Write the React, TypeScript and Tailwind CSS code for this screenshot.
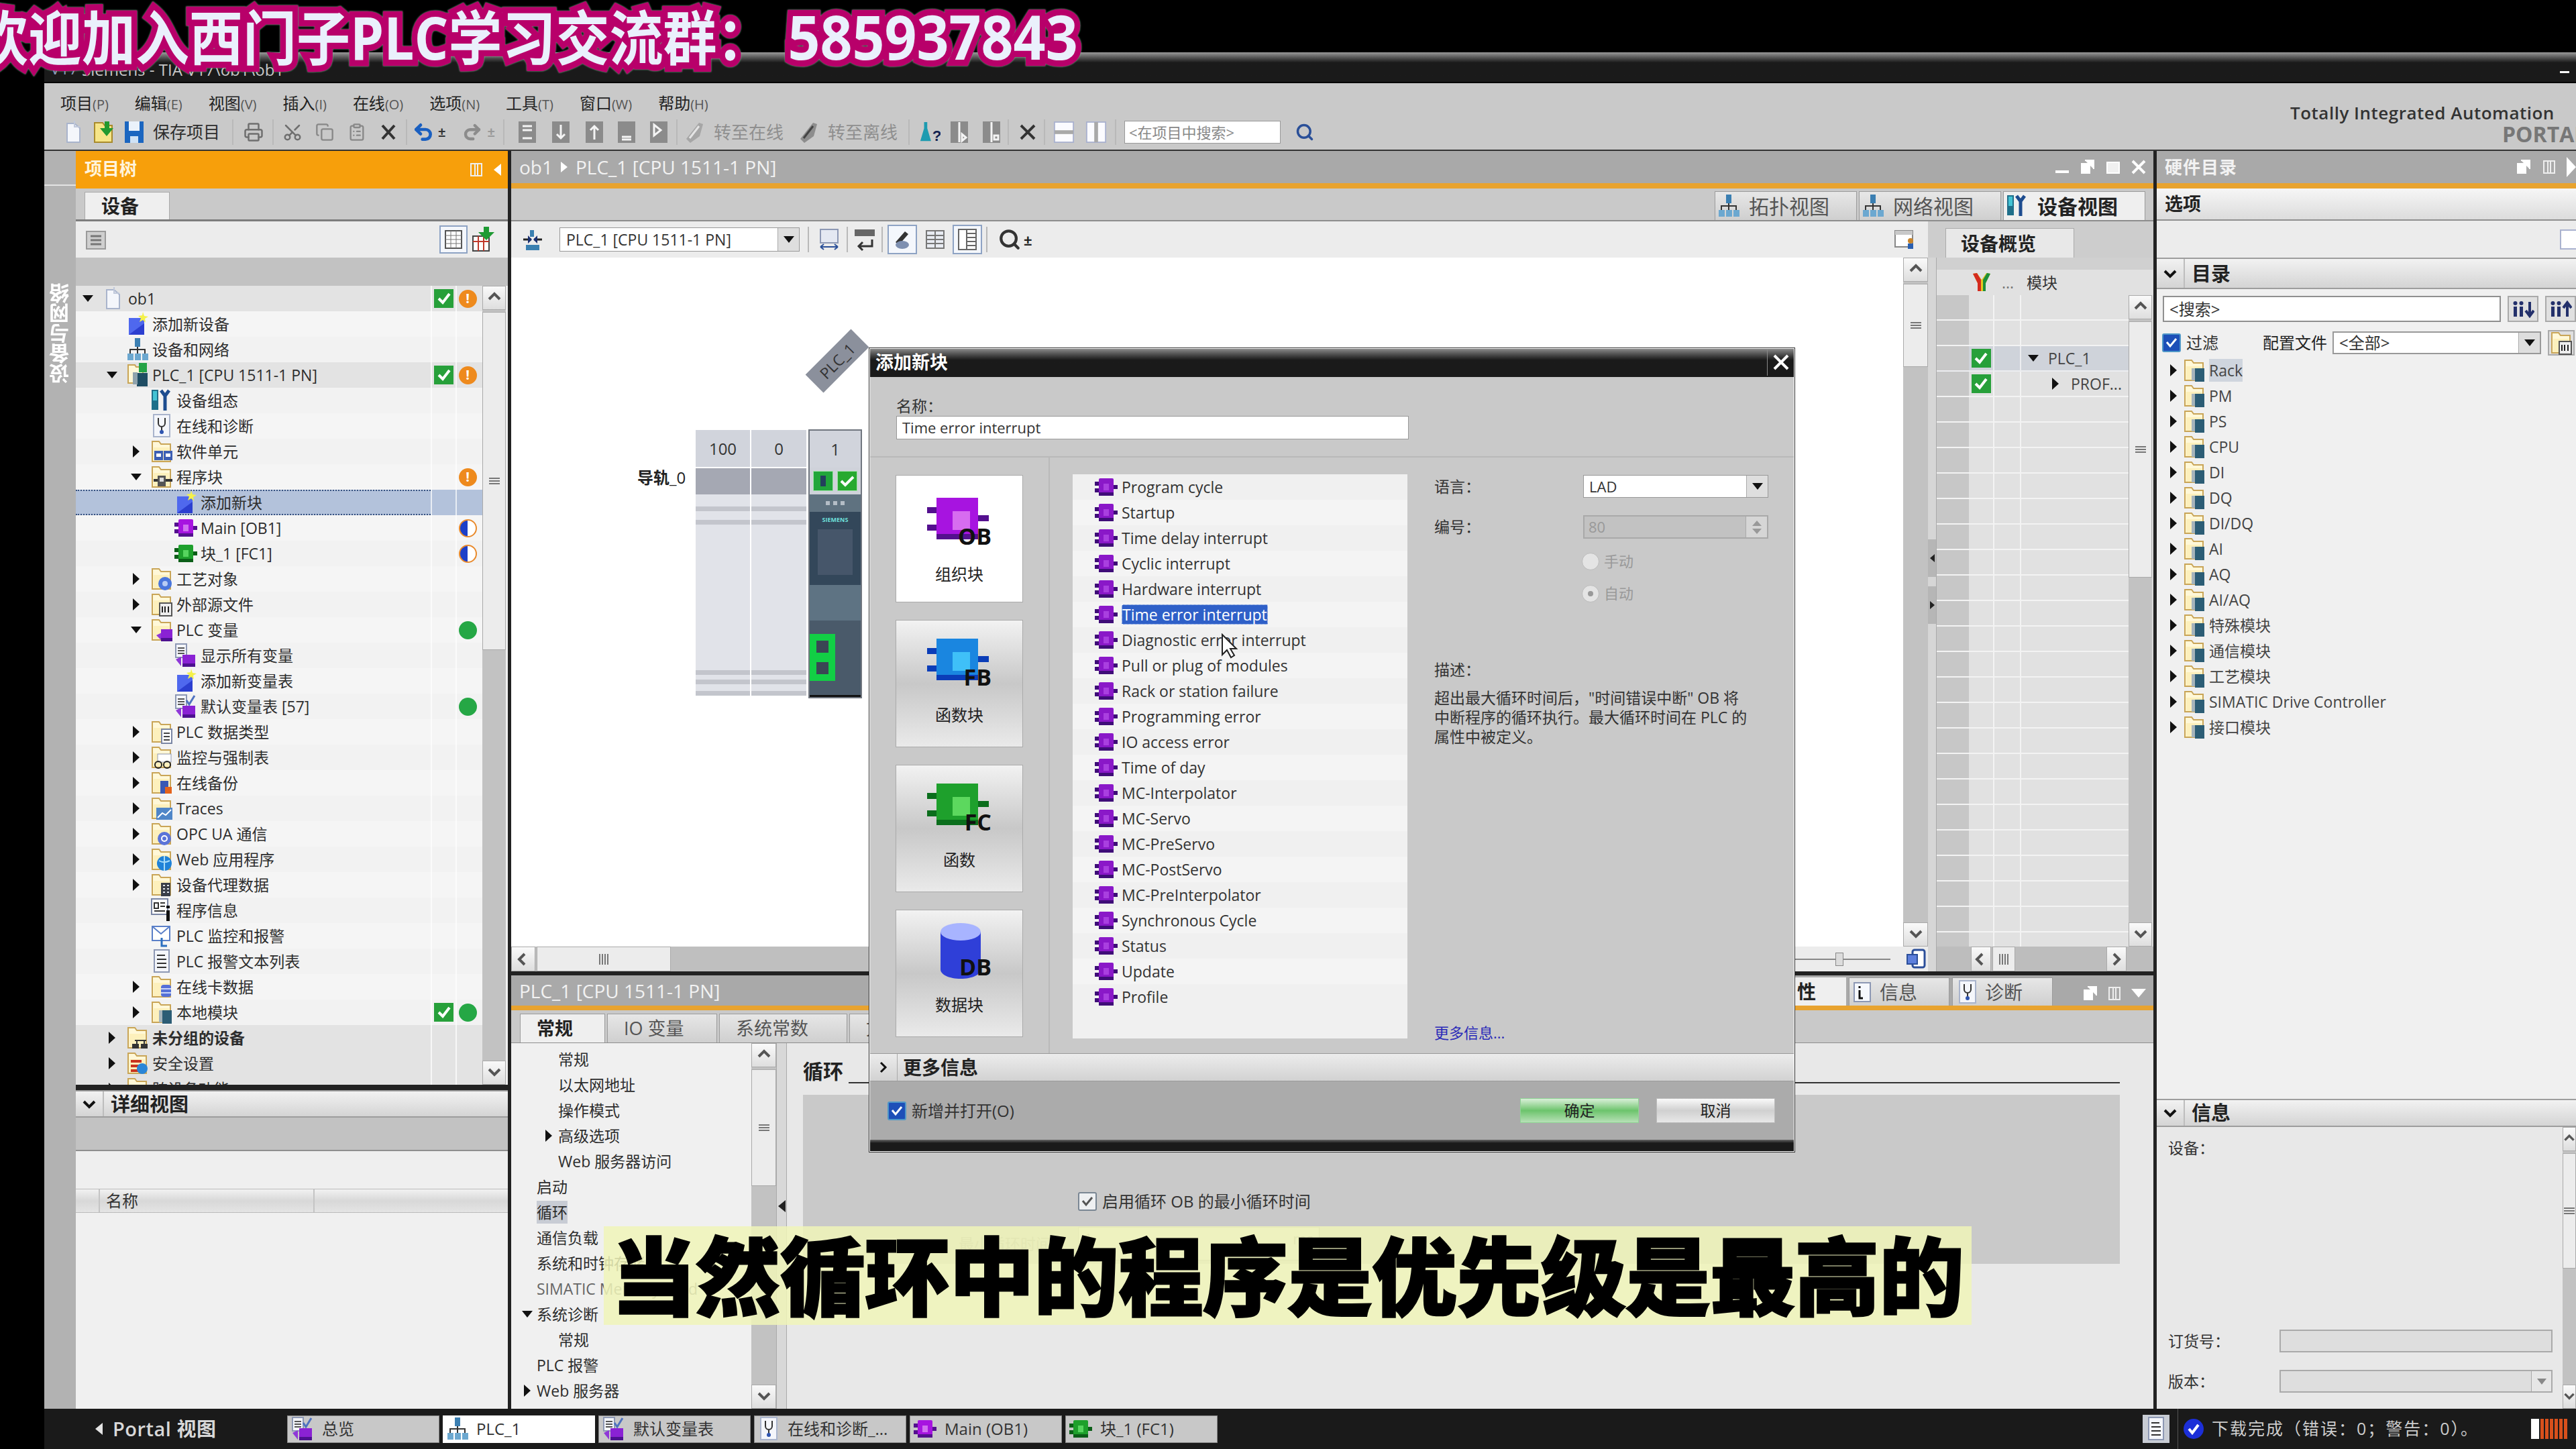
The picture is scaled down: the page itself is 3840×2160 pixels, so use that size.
import { Scissors, Copy, ClipboardList, Printer, Undo2, Redo2, Search } from "lucide-react";

type IconName = "doc" | "add" | "net" | "plc" | "cfg" | "diag" | "ob" | "fc" | "vars" | "table" | "info" | "alarm" | "alarmtext" | "ungrouped" | "safety"
  | "f-units" | "f-prog" | "f-tech" | "f-ext" | "f-var" | "f-type" | "f-watch" | "f-backup" | "f-trace" | "f-opc" | "f-web" | "f-proxy" | "f-card" | "f-local" | "none";

function Tri({ dir = "right" }: { dir?: "right" | "down" | "left" }) {
  if (dir === "down")
    return (
      <svg width="16" height="10" viewBox="0 0 16 10" className="shrink-0">
        <path d="M0 0h16L8 10z" fill="#111" />
      </svg>
    );
  if (dir === "left")
    return (
      <svg width="11" height="18" viewBox="0 0 11 18" className="shrink-0">
        <path d="M11 0v18L0 9z" fill="currentColor" />
      </svg>
    );
  return (
    <svg width="10" height="18" viewBox="0 0 10 18" className="shrink-0">
      <path d="M0 0l10 9-10 9z" fill="#111" />
    </svg>
  );
}

function Chevron({ dir }: { dir: "up" | "down" | "left" | "right" }) {
  const d = { up: "M3 13l8-8 8 8", down: "M3 6l8 8 8-8", left: "M13 3l-8 8 8 8", right: "M7 3l8 8-8 8" }[dir];
  return (
    <svg width="22" height="22" viewBox="0 0 22 22">
      <path d={d} fill="none" stroke="#555" strokeWidth="4" />
    </svg>
  );
}

function Folder({ children }: { children?: React.ReactNode }) {
  return (
    <svg width="32" height="36" viewBox="0 0 32 36" className="shrink-0">
      <path d="M2 33V3h10l3 4h14v26z" fill="#fff8d8" stroke="#c9a557" strokeWidth="2" />
      <path d="M4 12h23v20H4z" fill="#fdf0bc" />
      {children}
    </svg>
  );
}

function BlockGlyph({ body, dark, light }: { body: string; dark: string; light: string }) {
  return (
    <svg width="34" height="30" viewBox="0 0 34 30" className="shrink-0">
      <path d="M0 7h8v6H0zM0 17h8v6H0zM26 12h8v6h-8z" fill={dark} />
      <rect x="6" y="2" width="22" height="26" rx="2" fill={body} />
      <rect x="6" y="23" width="22" height="5" fill={dark} />
      <rect x="13" y="10" width="8" height="10" fill={light} />
    </svg>
  );
}

function Ico({ name }: { name: IconName }) {
  switch (name) {
    case "none":
      return <span className="w-[32px] shrink-0" />;
    case "doc":
      return (
        <svg width="32" height="36" viewBox="0 0 32 36" className="shrink-0">
          <path d="M6 5h11l8 7v21H6z" fill="#f4f6fb" stroke="#a9b4cc" strokeWidth="2" />
          <path d="M17 1v9h8" fill="none" stroke="#c0c8da" strokeWidth="2" />
        </svg>
      );
    case "add":
      return (
        <svg width="32" height="36" viewBox="0 0 32 36" className="shrink-0">
          <rect x="3" y="9" width="23" height="25" fill="#2c3fd0" />
          <path d="M3 9h23v8L3 34z" fill="#4f68ee" />
          <path d="M24 0l2 6 6 1-5 3 1 6-4-4-5 3 2-6-4-3 6-1z" fill="#f4f14a" />
        </svg>
      );
    case "net":
      return (
        <svg width="32" height="36" viewBox="0 0 32 36" className="shrink-0">
          <rect x="12" y="1" width="8" height="13" fill="#3b7fb2" />
          <path d="M5 24v-6h22v6M16 14v10" fill="none" stroke="#333" strokeWidth="2" />
          <rect x="1" y="24" width="9" height="10" fill="#6ca8d0" />
          <rect x="12" y="24" width="9" height="10" fill="#6ca8d0" />
          <rect x="23" y="24" width="9" height="10" fill="#6ca8d0" />
        </svg>
      );
    case "plc":
      return (
        <svg width="32" height="36" viewBox="0 0 32 36" className="shrink-0">
          <path d="M2 30V3h10l2 3h10v24z" fill="#fff8d8" stroke="#c9a557" strokeWidth="2" />
          <rect x="18" y="0" width="12" height="14" fill="#25a347" />
          <rect x="15" y="15" width="16" height="20" fill="#1f4d63" />
          <rect x="9" y="14" width="7" height="18" fill="#8fa3ad" />
        </svg>
      );
    case "cfg":
      return (
        <svg width="32" height="36" viewBox="0 0 32 36" className="shrink-0">
          <rect x="1" y="2" width="10" height="30" fill="#1f6f8a" />
          <rect x="3" y="4" width="6" height="14" fill="#43c3d4" />
          <path d="M15 3l6 8 6-8M21 11v22" fill="none" stroke="#1d4c8f" strokeWidth="5" />
        </svg>
      );
    case "diag":
      return (
        <svg width="32" height="36" viewBox="0 0 32 36" className="shrink-0">
          <rect x="4" y="1" width="24" height="33" fill="#f4f6fb" stroke="#a9b4cc" strokeWidth="2" />
          <path d="M11 6v8a5 5 0 0 0 10 0V6M16 19v6" fill="none" stroke="#333" strokeWidth="2" />
          <circle cx="16" cy="27" r="3" fill="#2f55b0" />
        </svg>
      );
    case "ob":
      return <BlockGlyph body="#a714e0" dark="#54108f" light="#d070f0" />;
    case "fc":
      return <BlockGlyph body="#1ea02c" dark="#0b5e18" light="#56d45e" />;
    case "vars":
    case "table":
      return (
        <svg width="34" height="36" viewBox="0 0 34 36" className="shrink-0">
          <rect x="2" y="1" width="16" height="20" fill="#f4f6fb" stroke="#8d98b4" strokeWidth="2" />
          <path d="M5 7h10M5 11h10M5 15h10" stroke="#555" strokeWidth="2" />
          {name === "table" && <path d="M18 9l4 6 8-13" fill="none" stroke="#4f72c0" strokeWidth="3" />}
          <path d="M2 24l8-4v14z" fill="#8f38d8" />
          <rect x="12" y="17" width="19" height="18" fill="#8a22d4" />
          <rect x="12" y="30" width="19" height="5" fill="#4d1190" />
        </svg>
      );
    case "info":
      return (
        <svg width="32" height="36" viewBox="0 0 32 36" className="shrink-0">
          <rect x="1" y="1" width="24" height="23" fill="#fff" stroke="#7a86a4" strokeWidth="2" />
          <path d="M5 7h6v8H5zM14 7h7M14 12h7M5 19h16" fill="none" stroke="#333" strokeWidth="2" />
          <rect x="23" y="11" width="5" height="4" fill="#111" />
          <rect x="23" y="18" width="5" height="16" fill="#111" />
        </svg>
      );
    case "alarm":
      return (
        <svg width="32" height="36" viewBox="0 0 32 36" className="shrink-0">
          <rect x="2" y="4" width="26" height="21" fill="#fff" stroke="#5a7fc8" strokeWidth="2" />
          <path d="M2 4l13 11L28 4" fill="none" stroke="#5a7fc8" strokeWidth="2" />
          <path d="M16 21v12h8" fill="none" stroke="#2b6fc0" strokeWidth="3" />
        </svg>
      );
    case "alarmtext":
      return (
        <svg width="32" height="36" viewBox="0 0 32 36" className="shrink-0">
          <rect x="5" y="1" width="22" height="33" fill="#f4f6fb" stroke="#8d98b4" strokeWidth="2" />
          <path d="M9 9h12M9 15h14M9 21h14M9 27h14" stroke="#333" strokeWidth="2" />
        </svg>
      );
    case "ungrouped":
      return (
        <Folder>
          <path d="M12 22h17M15 22v6M26 22v6" stroke="#333" strokeWidth="2" />
          <rect x="8" y="27" width="10" height="7" fill="#333" />
          <rect x="21" y="27" width="10" height="7" fill="#333" />
        </Folder>
      );
    case "safety":
      return (
        <Folder>
          <path d="M6 15h16M6 22h12M6 29h12" stroke="#c8331f" strokeWidth="4" />
          <circle cx="23" cy="26" r="8" fill="#2a86d8" />
        </Folder>
      );
    case "f-units":
      return (
        <Folder>
          <rect x="5" y="17" width="13" height="14" fill="#3d5fb4" />
          <rect x="19" y="17" width="13" height="14" fill="#3d5fb4" />
          <rect x="8" y="21" width="7" height="5" fill="#fff" />
          <rect x="22" y="21" width="7" height="5" fill="#fff" />
        </Folder>
      );
    case "f-prog":
      return (
        <Folder>
          <rect x="4" y="21" width="28" height="4" fill="#333" />
          <rect x="10" y="16" width="12" height="16" fill="#555" />
          <rect x="13" y="19" width="6" height="6" fill="#dcdcdc" />
        </Folder>
      );
    case "f-tech":
      return (
        <Folder>
          <circle cx="21" cy="25" r="10" fill="#4a76dc" />
          <circle cx="21" cy="25" r="4" fill="#b8ccf4" />
        </Folder>
      );
    case "f-ext":
      return (
        <Folder>
          <rect x="13" y="16" width="18" height="19" fill="#eee" stroke="#555" strokeWidth="2" />
          <path d="M17 21v9M21 21v9M26 21v9" stroke="#222" strokeWidth="2" />
        </Folder>
      );
    case "f-var":
      return (
        <Folder>
          <path d="M8 26l8-4v12z" fill="#8f38d8" />
          <rect x="15" y="17" width="17" height="18" fill="#8a22d4" />
          <rect x="15" y="30" width="17" height="5" fill="#4d1190" />
        </Folder>
      );
    case "f-type":
      return (
        <Folder>
          <rect x="16" y="14" width="15" height="21" fill="#fff" stroke="#7a86a4" strokeWidth="2" />
          <path d="M19 20h9M19 25h9M19 30h9" stroke="#444" strokeWidth="2" />
        </Folder>
      );
    case "f-watch":
      return (
        <Folder>
          <rect x="10" y="13" width="20" height="12" fill="#fff" stroke="#8d98b4" />
          <circle cx="11" cy="29" r="5" fill="none" stroke="#222" strokeWidth="2" />
          <circle cx="24" cy="29" r="5" fill="none" stroke="#222" strokeWidth="2" />
        </Folder>
      );
    case "f-backup":
      return (
        <Folder>
          <rect x="14" y="15" width="12" height="19" fill="#3a58b4" />
          <rect x="21" y="24" width="10" height="10" fill="#e4631c" />
        </Folder>
      );
    case "f-trace":
      return (
        <Folder>
          <rect x="8" y="17" width="24" height="18" fill="#4f86c8" />
          <path d="M10 32l7-7 5 3 8-8" fill="none" stroke="#fff" strokeWidth="2" />
        </Folder>
      );
    case "f-opc":
      return (
        <Folder>
          <circle cx="20" cy="25" r="10" fill="#5b74d8" />
          <circle cx="20" cy="25" r="4" fill="none" stroke="#fff" strokeWidth="2" />
        </Folder>
      );
    case "f-web":
      return (
        <Folder>
          <circle cx="20" cy="24" r="11" fill="#1f82d8" />
          <path d="M12 20c5 3 10 3 16 0M20 13v22" fill="none" stroke="#a8dcf8" strokeWidth="2" />
        </Folder>
      );
    case "f-proxy":
      return (
        <Folder>
          <rect x="15" y="15" width="14" height="20" fill="#3a3f48" />
          <path d="M18 19h3M24 19h3M18 24h3M24 24h3M18 29h3M24 29h3" stroke="#dfe3ea" strokeWidth="2" />
        </Folder>
      );
    case "f-card":
      return (
        <Folder>
          <rect x="15" y="15" width="15" height="18" rx="4" fill="#5470d8" />
          <path d="M15 21h15M15 27h15" stroke="#c8d4f8" strokeWidth="2" />
        </Folder>
      );
    case "f-local":
      return (
        <Folder>
          <rect x="12" y="15" width="6" height="18" fill="#a6b4bb" />
          <rect x="17" y="15" width="14" height="20" fill="#2c5d75" />
        </Folder>
      );
  }
}

function CheckBadge() {
  return (
    <span className="flex h-[28px] w-[29px] items-center justify-center bg-[#27a03a]">
      <svg width="22" height="20" viewBox="0 0 22 20">
        <path d="M3 10l6 6L19 3" fill="none" stroke="#fff" strokeWidth="4" />
      </svg>
    </span>
  );
}

function Status({ kind }: { kind?: string }) {
  if (kind === "warn")
    return (
      <span className="flex size-[27px] items-center justify-center rounded-full bg-[#ee8a1d] text-[20px] leading-none font-bold text-white">
        !
      </span>
    );
  if (kind === "half")
    return <span className="size-[27px] rounded-full border-2 border-[#e98a2c] bg-linear-to-r from-[#1c3fc8] from-50% to-white to-50%" />;
  if (kind === "ok") return <span className="size-[27px] rounded-full bg-[#25a745]" />;
  return null;
}

type Row = { l: number; a?: "right" | "down"; i: IconName; t: string; c?: boolean; s?: string; top?: boolean; sel?: boolean; b?: boolean };

const treeRows: Row[] = [
  { l: 0, a: "down", i: "doc", t: "ob1", c: true, s: "warn", top: true },
  { l: 1, i: "add", t: "添加新设备" },
  { l: 1, i: "net", t: "设备和网络" },
  { l: 1, a: "down", i: "plc", t: "PLC_1 [CPU 1511-1 PN]", c: true, s: "warn", top: true },
  { l: 2, i: "cfg", t: "设备组态" },
  { l: 2, i: "diag", t: "在线和诊断" },
  { l: 2, a: "right", i: "f-units", t: "软件单元" },
  { l: 2, a: "down", i: "f-prog", t: "程序块", s: "warn" },
  { l: 3, i: "add", t: "添加新块", sel: true },
  { l: 3, i: "ob", t: "Main [OB1]", s: "half" },
  { l: 3, i: "fc", t: "块_1 [FC1]", s: "half" },
  { l: 2, a: "right", i: "f-tech", t: "工艺对象" },
  { l: 2, a: "right", i: "f-ext", t: "外部源文件" },
  { l: 2, a: "down", i: "f-var", t: "PLC 变量", s: "ok" },
  { l: 3, i: "vars", t: "显示所有变量" },
  { l: 3, i: "add", t: "添加新变量表" },
  { l: 3, i: "table", t: "默认变量表 [57]", s: "ok" },
  { l: 2, a: "right", i: "f-type", t: "PLC 数据类型" },
  { l: 2, a: "right", i: "f-watch", t: "监控与强制表" },
  { l: 2, a: "right", i: "f-backup", t: "在线备份" },
  { l: 2, a: "right", i: "f-trace", t: "Traces" },
  { l: 2, a: "right", i: "f-opc", t: "OPC UA 通信" },
  { l: 2, a: "right", i: "f-web", t: "Web 应用程序" },
  { l: 2, a: "right", i: "f-proxy", t: "设备代理数据" },
  { l: 2, i: "info", t: "程序信息" },
  { l: 2, i: "alarm", t: "PLC 监控和报警" },
  { l: 2, i: "alarmtext", t: "PLC 报警文本列表" },
  { l: 2, a: "right", i: "f-card", t: "在线卡数据" },
  { l: 2, a: "right", i: "f-local", t: "本地模块", c: true, s: "ok" },
  { l: 1, a: "right", i: "ungrouped", t: "未分组的设备", top: true, b: true },
  { l: 1, a: "right", i: "safety", t: "安全设置", top: true },
  { l: 1, a: "right", i: "f-units", t: "跨设备功能", top: true },
];

const indents = ["pl-[8px]", "pl-[44px]", "pl-[80px]", "pl-[116px]"];

function TreeRow({ r }: { r: Row }) {
  const bg = r.sel ? "bg-[#b3c2db]" : r.top ? "bg-[#e3e3e3]" : "bg-[#f2f2f2] even:bg-[#f5f5f5]";
  return (
    <div className={`flex h-[38px] shrink-0 items-center ${bg}`}>
      <div
        className={`flex h-full w-[529px] items-center ${indents[r.l]} ${
          r.sel ? "border-y-2 border-dotted border-[#35507f]" : ""
        }`}
      >
        <span className="flex w-[20px] shrink-0 justify-center">{r.a && <Tri dir={r.a} />}</span>
        <span className="ml-[12px] flex w-[32px] shrink-0 justify-center">
          <Ico name={r.i} />
        </span>
        <span className={`ml-[6px] text-[23px] whitespace-nowrap text-[#2d2d2d] ${r.b ? "font-bold" : ""}`}>{r.t}</span>
      </div>
      <div className="flex h-full w-[37px] items-center justify-center border-l-2 border-white/70">{r.c && <CheckBadge />}</div>
      <div className="flex h-full w-[40px] items-center justify-center border-l-2 border-white/70 pr-[6px]">
        <Status kind={r.s} />
      </div>
    </div>
  );
}

function Grip({ vertical = false }: { vertical?: boolean }) {
  return vertical ? (
    <div className="flex gap-[2px]">
      <span className="h-[16px] w-[2px] bg-[#777]" />
      <span className="h-[16px] w-[2px] bg-[#777]" />
      <span className="h-[16px] w-[2px] bg-[#777]" />
      <span className="h-[16px] w-[2px] bg-[#777]" />
    </div>
  ) : (
    <div className="flex flex-col gap-[2px]">
      <span className="h-[2px] w-[16px] bg-[#777]" />
      <span className="h-[2px] w-[16px] bg-[#777]" />
      <span className="h-[2px] w-[16px] bg-[#777]" />
    </div>
  );
}

function ScrollBtn({ dir, className = "" }: { dir: "up" | "down" | "left" | "right"; className?: string }) {
  return (
    <div className={`flex shrink-0 items-center justify-center border border-[#aaa] bg-linear-to-b from-[#fafafa] to-[#dedede] ${className}`}>
      <Chevron dir={dir} />
    </div>
  );
}

function VScroll({ thumb, className = "w-[35px]" }: { thumb: string; className?: string }) {
  return (
    <div className={`flex shrink-0 flex-col bg-[#c2c2c2] ${className}`}>
      <ScrollBtn dir="up" className="h-[36px] w-full" />
      <div className={`mt-[3px] flex w-full items-center justify-center border border-[#aaa] bg-[#ececec] ${thumb}`}>
        <Grip />
      </div>
      <div className="flex-1" />
      <ScrollBtn dir="down" className="h-[36px] w-full" />
    </div>
  );
}

function WinIcon({ kind }: { kind: "restore" | "split" | "min" | "max" | "close" | "down" }) {
  const paths = {
    restore: <path d="M3 7h12v14H3zM8 2h13v13" fill="#fff" stroke="#fff" strokeWidth="2" />,
    split: <path d="M4 3h16v18H4zM10 3v18M14 3v18" fill="none" stroke="#eee" strokeWidth="2" />,
    min: <path d="M2 19h20" stroke="#fff" strokeWidth="4" />,
    max: <path d="M3 5h18v16H3z" fill="#f0f0f0" stroke="#fff" strokeWidth="2" />,
    close: <path d="M3 3l18 18M21 3L3 21" stroke="#fff" strokeWidth="4" />,
    down: <path d="M1 5h22L12 18z" fill="#fff" />,
  };
  return (
    <svg width="24" height="24" viewBox="0 0 24 24" className="shrink-0">
      {paths[kind]}
    </svg>
  );
}

function PanelHeader({ children, right, pad = "pr-[10px]" }: { children?: React.ReactNode; right?: React.ReactNode; pad?: string }) {
  return (
    <div className="flex h-[56px] shrink-0 items-center justify-between border-b-[8px] border-[#e8a32f] bg-[#a9a9a9] pl-[12px]">
      <div className="flex items-center gap-[12px] text-[28px] text-[#f2f2f2]">{children}</div>
      <div className={`flex items-center gap-[14px] ${pad}`}>{right}</div>
    </div>
  );
}

function SectionHead({ title, h = "h-[41px]" }: { title: string; h?: string }) {
  return (
    <div className={`flex shrink-0 items-center border-y-2 border-[#9d9d9d] bg-linear-to-b from-[#f2f2f2] to-[#d4d4d4] ${h}`}>
      <div className="flex h-full w-[42px] items-center justify-center border-r-2 border-[#bdbdbd]">
        <svg width="20" height="14" viewBox="0 0 20 14">
          <path d="M2 3l8 8 8-8" fill="none" stroke="#111" strokeWidth="4" />
        </svg>
      </div>
      <span className="ml-[10px] text-[29px] leading-[36px] font-bold text-[#222]">{title}</span>
    </div>
  );
}

function ToolBtn({ children, className = "" }: { children: React.ReactNode; className?: string }) {
  return <span className={`flex h-[38px] w-[32px] shrink-0 items-center justify-center ${className}`}>{children}</span>;
}

function Sep({ className = "" }: { className?: string }) {
  return <span className={`h-[38px] w-[2px] shrink-0 bg-[#b9b9b9] ${className}`} />;
}

function GrayBox({ d }: { d: string }) {
  return (
    <svg width="30" height="34" viewBox="0 0 30 34">
      <rect x="2" y="1" width="26" height="32" fill="#8b8b8b" />
      <path d={d} fill="none" stroke="#f4f4f4" strokeWidth="3" />
    </svg>
  );
}

function SortGlyph({ up }: { up?: boolean }) {
  return (
    <svg width="34" height="26" viewBox="0 0 34 26">
      <path d="M3 9h5v15H3zM12 9h5v15h-5z" fill="#23306b" />
      <circle cx="5.5" cy="4" r="3" fill="#23306b" />
      <circle cx="14.5" cy="4" r="3" fill="#23306b" />
      <path d={up ? "M27 24V5M21 11l6-8 6 8" : "M27 2v19M21 15l6 8 6-8"} fill="none" stroke="#23306b" strokeWidth="4" />
    </svg>
  );
}

function MainToolbar() {
  return (
    <div className="flex h-[46px] items-center pl-[28px]">
      <ToolBtn>
        <Ico name="doc" />
      </ToolBtn>
      <ToolBtn className="ml-[13px]">
        <svg width="32" height="36" viewBox="0 0 32 36">
          <path d="M2 33V4h12l3 4h11v25z" fill="#f6e588" stroke="#a98b2c" strokeWidth="2" />
          <path d="M17 2h7v10h6L20 24 10 12h7z" fill="#22992f" />
        </svg>
      </ToolBtn>
      <ToolBtn className="ml-[13px]">
        <svg width="30" height="36" viewBox="0 0 30 36">
          <path d="M1 2h28v32H1z" fill="#1b66c0" />
          <rect x="7" y="2" width="16" height="14" fill="#eaf2fb" />
          <rect x="9" y="24" width="12" height="10" fill="#cfe2f5" />
        </svg>
      </ToolBtn>
      <span className="ml-[12px] text-[25px] text-[#2d2d2d]">保存项目</span>
      <Sep className="ml-[18px]" />
      <ToolBtn className="ml-[14px]">
        <Printer size={30} color="#6f6f6f" />
      </ToolBtn>
      <Sep className="ml-[12px]" />
      <ToolBtn className="ml-[12px]">
        <Scissors size={30} color="#6f6f6f" className="-rotate-90" />
      </ToolBtn>
      <ToolBtn className="ml-[16px]">
        <Copy size={28} color="#888" />
      </ToolBtn>
      <ToolBtn className="ml-[16px]">
        <ClipboardList size={28} color="#888" />
      </ToolBtn>
      <ToolBtn className="ml-[15px]">
        <svg width="24" height="26" viewBox="0 0 24 26">
          <path d="M3 3l18 20M21 3L3 23" stroke="#333" strokeWidth="4" />
        </svg>
      </ToolBtn>
      <Sep className="ml-[10px]" />
      <ToolBtn className="ml-[8px]">
        <Undo2 size={32} color="#1a5fc0" strokeWidth={3.5} />
      </ToolBtn>
      <span className="ml-[6px] text-[20px] font-bold text-[#333]">±</span>
      <ToolBtn className="ml-[24px]">
        <Redo2 size={30} color="#8c8c8c" strokeWidth={3.5} />
      </ToolBtn>
      <span className="ml-[6px] text-[20px] font-bold text-[#999]">±</span>
      <Sep className="ml-[12px]" />
      <ToolBtn className="ml-[18px]">
        <GrayBox d="M8 8h14M8 14h14M8 26h14" />
      </ToolBtn>
      <ToolBtn className="ml-[18px]">
        <GrayBox d="M15 6v20M9 20l6 6 6-6" />
      </ToolBtn>
      <ToolBtn className="ml-[18px]">
        <GrayBox d="M15 28V8M9 14l6-6 6 6" />
      </ToolBtn>
      <ToolBtn className="ml-[16px]">
        <GrayBox d="M8 24h14M8 28h14" />
      </ToolBtn>
      <ToolBtn className="ml-[16px]">
        <GrayBox d="M8 6l10 8-10 8z" />
      </ToolBtn>
      <Sep className="ml-[10px]" />
      <ToolBtn className="ml-[10px]">
        <svg width="32" height="36" viewBox="0 0 32 36">
          <path d="M3 28L22 4l6 2-5 18-14 10z" fill="#a6a6a6" />
          <path d="M8 27l14-18" stroke="#e4e4e4" strokeWidth="3" />
        </svg>
      </ToolBtn>
      <span className="ml-[12px] text-[26px] text-[#8f8f8f]">转至在线</span>
      <ToolBtn className="ml-[22px]">
        <svg width="32" height="36" viewBox="0 0 32 36">
          <path d="M3 28L22 4l6 2-5 18-14 10z" fill="#8d8d8d" />
          <path d="M8 27l14-18" stroke="#444" strokeWidth="3" />
        </svg>
      </ToolBtn>
      <span className="ml-[12px] text-[26px] text-[#8f8f8f]">转至离线</span>
      <Sep className="ml-[16px]" />
      <ToolBtn className="ml-[14px]">
        <svg width="34" height="36" viewBox="0 0 34 36">
          <path d="M8 2h5v10l6 20H2l6-20z" fill="#1d9bb0" />
          <text x="21" y="32" fontSize="24" fontWeight="700" fill="#12214f" fontFamily="Liberation Sans">?</text>
        </svg>
      </ToolBtn>
      <ToolBtn className="ml-[12px]">
        <GrayBox d="M15 2v30M19 20l6 5-6 5z" />
      </ToolBtn>
      <ToolBtn className="ml-[16px]">
        <GrayBox d="M15 2v30M19 22h6v6h-6z" />
      </ToolBtn>
      <Sep className="ml-[8px]" />
      <ToolBtn className="ml-[12px]">
        <svg width="26" height="26" viewBox="0 0 26 26">
          <path d="M3 3l20 20M23 3L3 23" stroke="#333" strokeWidth="4" />
        </svg>
      </ToolBtn>
      <Sep className="ml-[8px]" />
      <ToolBtn className="ml-[12px]">
        <svg width="34" height="36" viewBox="0 0 34 36">
          <rect x="2" y="2" width="30" height="32" fill="#fbfbff" stroke="#aab2cf" strokeWidth="2" />
          <rect x="2" y="15" width="30" height="6" fill="#a9a9a9" />
        </svg>
      </ToolBtn>
      <ToolBtn className="ml-[16px]">
        <svg width="34" height="36" viewBox="0 0 34 36">
          <rect x="2" y="2" width="30" height="32" fill="#fbfbff" stroke="#aab2cf" strokeWidth="2" />
          <rect x="14" y="2" width="6" height="32" fill="#a9a9a9" />
        </svg>
      </ToolBtn>
      <Sep className="ml-[12px]" />
      <div className="ml-[12px] flex h-[34px] w-[233px] items-center border border-[#999] bg-white pl-[6px] text-[22px] text-[#888]">
        &lt;在项目中搜索&gt;
      </div>
      <ToolBtn className="ml-[20px]">
        <Search size={28} color="#2a4f98" strokeWidth={3} />
      </ToolBtn>
    </div>
  );
}

function MenuBar() {
  const items = [
    ["项目", "(P)"],
    ["编辑", "(E)"],
    ["视图", "(V)"],
    ["插入", "(I)"],
    ["在线", "(O)"],
    ["选项", "(N)"],
    ["工具", "(T)"],
    ["窗口", "(W)"],
    ["帮助", "(H)"],
  ];
  return (
    <div className="flex h-[101px] shrink-0 border-b-2 border-[#333] bg-[#c9c9c9]">
      <div className="flex-1">
        <div className="flex h-[50px] items-end gap-[39px] pb-[2px] pl-[24px]">
          {items.map(([a, b]) => (
            <span key={a} className="text-[24px] whitespace-nowrap text-[#222]">
              {a}
              <span className="text-[20px] text-[#555]">{b}</span>
            </span>
          ))}
        </div>
        <MainToolbar />
      </div>
      <div className="w-[426px] shrink-0 overflow-hidden pt-[28px]">
        <p className="text-[26px] leading-[32px] font-semibold tracking-[0.5px] whitespace-nowrap text-[#333]">Totally Integrated Automation</p>
        <p className="pl-[316px] text-[32px] leading-[32px] font-bold whitespace-nowrap text-[#777]">PORTAL</p>
      </div>
    </div>
  );
}

function LeftPanel() {
  return (
    <div className="flex w-[644px] shrink-0 flex-col bg-[#ececec]">
      <div className="flex h-[56px] shrink-0 items-center justify-between bg-[#f79f0b] pr-[10px] pl-[13px]">
        <span className="pb-[4px] text-[26px] font-bold text-[#fff4dc]">项目树</span>
        <div className="flex items-center gap-[14px] text-white">
          <WinIcon kind="split" />
          <Tri dir="left" />
        </div>
      </div>
      <div className="flex h-[49px] shrink-0 items-end border-b-[3px] border-[#7d7d7d] bg-[#c9c9c9] pl-[13px]">
        <div className="flex h-[41px] w-[127px] items-center justify-start border-x border-t border-[#aaa] bg-[#efefef] pl-[24px] text-[28px] font-bold text-[#222]">设备</div>
      </div>
      <div className="flex h-[54px] shrink-0 items-center justify-between bg-[#ececec] pr-[18px] pl-[14px]">
        <svg width="32" height="36" viewBox="0 0 32 36">
          <rect x="2" y="6" width="28" height="26" fill="#cfcfcf" stroke="#9a9a9a" strokeWidth="2" />
          <path d="M8 13h16M8 19h16M8 25h16" stroke="#777" strokeWidth="3" />
        </svg>
        <div className="flex items-center gap-[6px]">
          <span className="flex size-[42px] items-center justify-center border-2 border-[#8ea3c4] bg-[#f4f7fc]">
            <svg width="28" height="30" viewBox="0 0 28 30">
              <rect x="2" y="2" width="24" height="26" fill="#fff" stroke="#555" strokeWidth="2" />
              <path d="M2 9h24M2 15h24M2 21h24M10 2v26M18 2v26" stroke="#777" />
            </svg>
          </span>
          <svg width="36" height="38" viewBox="0 0 36 38">
            <rect x="2" y="14" width="24" height="22" fill="#fff" stroke="#444" strokeWidth="2" />
            <path d="M2 22h24M10 14v22M18 14v22" stroke="#c0392b" strokeWidth="2" />
            <path d="M18 0h8v8h8L22 20 10 8h8z" fill="#1e9a33" />
          </svg>
        </div>
      </div>
      <div className="h-[42px] shrink-0 bg-[#c2c2c2]" />
      <div className="flex h-[1191px] shrink-0">
        <div className="flex w-[606px] flex-col overflow-hidden">
          {treeRows.map((r) => (
            <TreeRow key={r.t} r={r} />
          ))}
        </div>
        <VScroll thumb="h-[504px]" />
        <div className="w-[3px] bg-[#f0f0f0]" />
      </div>
      <div className="h-[8px] shrink-0 bg-[#222]" />
      <SectionHead title="详细视图" />
      <div className="h-[50px] shrink-0 border-b-2 border-[#8f8f8f] bg-[#c2c2c2]" />
      <div className="h-[56px] shrink-0 bg-[#efefef]" />
      <div className="flex h-[36px] shrink-0 items-center border-y border-[#bbb] bg-linear-to-b from-[#f2f2f2] via-[#d8d8d8] to-[#e4e4e4]">
        <span className="h-full w-[36px] border-r-2 border-[#c4c4c4]" />
        <span className="flex h-full w-[320px] items-center border-r-2 border-[#c4c4c4] pl-[9px] text-[24px] text-[#333]">名称</span>
      </div>
      <div className="flex-1 bg-[#f0f0f0]" />
    </div>
  );
}

function BigTab({ icon, label, active }: { icon: IconName; label: string; active?: boolean }) {
  return (
    <div
      className={`flex h-[43px] w-[212px] items-center gap-[14px] border-x border-t border-[#9b9b9b] pl-[4px] text-[30px] ${
        active ? "bg-[#efefef] font-bold text-[#222]" : "bg-linear-to-b from-[#e7e7e7] to-[#cfcfcf] text-[#555]"
      }`}
    >
      <Ico name={icon} />
      {label}
    </div>
  );
}

function SlotBody() {
  return (
    <div className="relative flex-1 bg-[#e1e3e9]">
      <div className="absolute top-[18px] h-[7px] w-full bg-[#c3c5cc]" />
      <div className="absolute top-[38px] h-[7px] w-full bg-[#c3c5cc]" />
      <div className="absolute top-[262px] h-[7px] w-full bg-[#c3c5cc]" />
      <div className="absolute top-[276px] h-[7px] w-full bg-[#c3c5cc]" />
      <div className="absolute bottom-0 h-[7px] w-full bg-[#c3c5cc]" />
    </div>
  );
}

function Rack() {
  return (
    <div className="relative h-[1027px] overflow-hidden bg-white">
      <div className="absolute top-[135px] left-[438px] flex h-[38px] w-[96px] -rotate-45 items-center justify-center bg-[#8b909c] text-[23px] text-[#333]">PLC_1</div>
      <span className="absolute top-[310px] left-[188px] text-[24px] whitespace-nowrap text-[#222]">
        <b>导轨</b>_0
      </span>
      <div className="absolute top-[257px] left-[275px] flex h-[396px] w-[81px] flex-col">
        <div className="flex h-[55px] items-center justify-center bg-[#d1d4dc] text-[24px] text-[#333]">100</div>
        <div className="mt-[2px] h-[39px] bg-[#a5a8b3]" />
        <SlotBody />
      </div>
      <div className="absolute top-[257px] left-[358px] flex h-[396px] w-[82px] flex-col">
        <div className="flex h-[55px] items-center justify-center bg-[#d1d4dc] text-[24px] text-[#333]">0</div>
        <div className="mt-[2px] h-[39px] bg-[#a5a8b3]" />
        <SlotBody />
      </div>
      <div className="absolute top-[256px] left-[443px] flex h-[401px] w-[80px] flex-col border-2 border-[#70767f]">
        <div className="flex h-[55px] shrink-0 items-center justify-center bg-[#d1d4dc] text-[24px] text-[#333]">1</div>
        <div className="flex h-[40px] shrink-0 items-center justify-center gap-[6px] bg-[#cfd2da]">
          <span className="flex h-[30px] w-[30px] items-center justify-center border border-[#9fe0a8] bg-[#21a63a]">
            <span className="h-[16px] w-[8px] bg-[#23405c]" />
          </span>
          <span className="flex h-[30px] w-[30px] items-center justify-center border border-[#9fe0a8] bg-[#27a92f]">
            <svg width="22" height="18" viewBox="0 0 22 18">
              <path d="M2 9l6 6L20 3" fill="none" stroke="#fff" strokeWidth="4" />
            </svg>
          </span>
        </div>
        <div className="flex h-[26px] shrink-0 items-center justify-center gap-[5px] bg-[#5f7280]">
          <span className="size-[6px] bg-[#b4bdc6]" />
          <span className="size-[6px] bg-[#b4bdc6]" />
          <span className="size-[6px] bg-[#b4bdc6]" />
        </div>
        <div className="flex h-[109px] shrink-0 flex-col items-center bg-[#33475a]">
          <span className="mt-[6px] text-[9px] leading-[12px] font-bold text-[#6fe0dc]">SIEMENS</span>
          <div className="mt-[8px] h-[68px] w-[52px] bg-[#46566a]" />
        </div>
        <div className="h-[53px] shrink-0 bg-[#5e7383]" />
        <div className="flex flex-1 bg-[#4a5a6a]">
          <div className="mt-[20px] flex h-[70px] w-[38px] flex-col items-center justify-center gap-[14px] bg-[#12cf45]">
            <span className="size-[18px] bg-[#3a4654]" />
            <span className="size-[18px] bg-[#3a4654]" />
          </div>
        </div>
        <div className="h-[3px] shrink-0 bg-[#111]" />
      </div>
    </div>
  );
}

function DeviceOverview() {
  const rows = Array.from({ length: 26 }, (_, i) => i);
  return (
    <div className="flex w-[336px] shrink-0 flex-col bg-[#cdcdcd]">
      <div className="flex h-[54px] shrink-0 items-end pl-[26px]">
        <div className="flex h-[44px] w-[192px] items-center justify-start border-x border-t border-[#aaa] bg-[#e8e8e8] pl-[22px] text-[28px] font-bold text-[#222]">设备概览</div>
      </div>
      <div className="flex flex-1 overflow-hidden">
        <div className="flex w-[13px] shrink-0 flex-col items-center border-r border-[#aaa] bg-[#d6d6d6] pt-[420px]">
          <span className="flex h-[56px] w-full items-center justify-center bg-[#b6b6b6]">
            <svg width="7" height="12" viewBox="0 0 7 12">
              <path d="M7 0v12L0 6z" fill="#222" />
            </svg>
          </span>
          <span className="mt-[14px] flex h-[56px] w-full items-center justify-center bg-[#b6b6b6]">
            <svg width="7" height="12" viewBox="0 0 7 12">
              <path d="M0 0v12l7-6z" fill="#222" />
            </svg>
          </span>
        </div>
        <div className="flex flex-1 flex-col overflow-hidden bg-[#dcdcdc]">
          <div className="h-[18px] shrink-0 bg-[#d0d0d0]" />
          <div className="flex h-[38px] shrink-0 items-center bg-[#e1e1e1] text-[23px] text-[#333]">
            <span className="w-[48px]" />
            <span className="flex w-[38px] justify-center">
              <svg width="30" height="32" viewBox="0 0 30 32">
                <path d="M2 3l7 14v12h12V17l7-14-6-1-7 10-7-10z" fill="#e4c720" />
                <path d="M2 3l7 14v12h5V12L8 2z" fill="#d42b1f" />
                <path d="M28 3l-7 14v12h-4V12l6-10z" fill="#1c8f3a" />
              </svg>
            </span>
            <span className="w-[40px] text-center text-[#777]">...</span>
            <span className="pl-[8px]">模块</span>
          </div>
          <div className="flex min-h-0 flex-1">
            <div className="flex w-[286px] flex-col overflow-hidden">
              {rows.map((i) => (
                <div key={i} className={`flex h-[38px] shrink-0 border-b-2 border-white/60 text-[23px] text-[#444] ${i === 2 ? "bg-[#cfd3da]" : "bg-[#e1e1e1]"}`}>
                  <span className="w-[48px] shrink-0 bg-[#c7c7c7]" />
                  <span className="flex w-[38px] shrink-0 items-center justify-center border-r-2 border-white/60">{(i === 2 || i === 3) && <CheckBadge />}</span>
                  <span className="w-[40px] shrink-0 border-r-2 border-white/60" />
                  {i === 2 && (
                    <span className="flex items-center gap-[14px] pl-[10px]">
                      <Tri dir="down" />
                      PLC_1
                    </span>
                  )}
                  {i === 3 && (
                    <span className="flex items-center gap-[18px] pl-[46px] whitespace-nowrap">
                      <Tri />
                      PROF...
                    </span>
                  )}
                </div>
              ))}
            </div>
            <VScroll thumb="h-[382px]" />
          </div>
          <div className="flex h-[37px] shrink-0 items-center bg-[#bdbdbd] pl-[51px]">
            <ScrollBtn dir="left" className="h-[37px] w-[30px]" />
            <div className="ml-[2px] flex h-[37px] w-[34px] items-center justify-center border border-[#aaa] bg-[#ececec]">
              <Grip vertical />
            </div>
            <ScrollBtn dir="right" className="ml-[136px] h-[37px] w-[30px]" />
          </div>
        </div>
      </div>
    </div>
  );
}

function CenterTop() {
  return (
    <div className="flex h-[1223px] shrink-0 flex-col">
      <PanelHeader
        right={
          <>
            <WinIcon kind="min" />
            <WinIcon kind="restore" />
            <WinIcon kind="max" />
            <WinIcon kind="close" />
          </>
        }
      >
        <span>ob1</span>
        <svg width="10" height="16" viewBox="0 0 10 16">
          <path d="M0 0l10 8-10 8z" fill="#fff" />
        </svg>
        <span>PLC_1 [CPU 1511-1 PN]</span>
      </PanelHeader>
      <div className="flex h-[49px] shrink-0 items-end justify-end gap-[3px] border-b-2 border-[#8d8d8d] bg-[#c9c9c9] pr-[12px]">
        <BigTab icon="net" label="拓扑视图" />
        <BigTab icon="net" label="网络视图" />
        <BigTab icon="cfg" label="设备视图" active />
      </div>
      <div className="flex min-h-0 flex-1">
        <div className="flex w-[2112px] shrink-0 flex-col">
          <div className="flex h-[54px] shrink-0 items-center bg-[#ececec] pl-[16px]">
            <svg width="32" height="36" viewBox="0 0 32 36">
              <path d="M2 18h12M30 18H18" stroke="#222" strokeWidth="3" />
              <path d="M9 12l6 6-6 6zM23 12l-6 6 6 6z" fill="#1a2f70" />
              <path d="M6 26h20v8H6z" fill="#3a7fb0" />
              <path d="M12 4h6v10h-6z" fill="#3a7fb0" />
            </svg>
            <div className="ml-[24px] flex h-[36px] w-[358px] items-center justify-between border border-[#999] bg-white pl-[9px] text-[23px] text-[#333]">
              PLC_1 [CPU 1511-1 PN]
              <span className="flex h-full w-[32px] items-center justify-center border-l border-[#aaa] bg-[#dedede]">
                <Tri dir="down" />
              </span>
            </div>
            <Sep className="ml-[12px]" />
            <span className="ml-[12px] flex w-[36px] flex-col items-center text-[#2a4f98]">
              <svg width="34" height="34" viewBox="0 0 34 34">
                <rect x="4" y="2" width="26" height="20" fill="#e4e8f2" stroke="#8d98b4" strokeWidth="2" />
                <path d="M4 28h26M4 28l5-4M4 28l5 4M30 28l-5-4M30 28l-5 4" stroke="#2a4f98" strokeWidth="2" fill="none" />
              </svg>
            </span>
            <Sep className="ml-[8px]" />
            <span className="ml-[8px] w-[36px] text-[#555]">
              <svg width="34" height="36" viewBox="0 0 34 36">
                <path d="M2 3h30v10H2z" fill="#666" />
                <path d="M28 18v10H8M14 22l-6 6 6 6" fill="none" stroke="#333" strokeWidth="3" />
              </svg>
            </span>
            <Sep className="ml-[6px]" />
            <span className="ml-[7px] flex size-[44px] items-center justify-center border-2 border-[#8ea3c4] bg-[#f4f7fc]">
              <svg width="32" height="32" viewBox="0 0 32 32">
                <path d="M6 20L20 4l5 4-14 16z" fill="#333" />
                <ellipse cx="16" cy="24" rx="10" ry="6" fill="#7d8fb0" />
              </svg>
            </span>
            <span className="ml-[5px] flex size-[44px] items-center justify-center">
              <svg width="32" height="32" viewBox="0 0 32 32">
                <path d="M3 3h26v26H3zM3 16h26M16 3v26M3 10h26M3 22h26" fill="#e8ebf2" stroke="#777" strokeWidth="2" />
              </svg>
            </span>
            <span className="ml-[4px] flex size-[44px] items-center justify-center border-2 border-[#8ea3c4] bg-[#f4f7fc]">
              <svg width="30" height="34" viewBox="0 0 30 34">
                <rect x="2" y="2" width="26" height="30" fill="#fff" stroke="#666" strokeWidth="2" />
                <path d="M14 2v30M14 8h14M14 14h14M14 20h14M14 26h14" stroke="#666" strokeWidth="2" />
              </svg>
            </span>
            <Sep className="ml-[6px]" />
            <Search size={34} color="#333" strokeWidth={3} className="ml-[16px]" />
            <span className="ml-[4px] text-[22px] font-bold text-[#222]">±</span>
            <span className="ml-auto pr-[18px]">
              <svg width="32" height="30" viewBox="0 0 32 30">
                <rect x="1" y="2" width="26" height="24" fill="#fff" stroke="#888" strokeWidth="2" />
                <rect x="1" y="2" width="26" height="6" fill="#c8c8c8" />
                <circle cx="24" cy="17" r="4" fill="#c8842a" />
                <rect x="20" y="21" width="8" height="8" fill="#2a5fb0" />
              </svg>
            </span>
          </div>
          <div className="flex min-h-0 flex-1">
            <div className="flex w-[2075px] shrink-0 flex-col">
              <Rack />
              <div className="flex h-[37px] shrink-0 items-center bg-[#bfbfbf]">
                <ScrollBtn dir="left" className="h-[37px] w-[36px]" />
                <div className="ml-[2px] flex h-[37px] w-[200px] items-center justify-center border border-[#aaa] bg-[#ececec]">
                  <Grip vertical />
                </div>
                <div className="ml-auto flex h-full w-[187px] items-center bg-[#ececec] pl-[20px]">
                  <div className="relative h-[2px] w-[148px] bg-[#888]">
                    <span className="absolute -top-[9px] left-[66px] h-[20px] w-[12px] border border-[#888] bg-[#dcdcdc]" />
                  </div>
                </div>
              </div>
            </div>
            <div className="flex w-[37px] shrink-0 flex-col">
              <VScroll thumb="h-[124px]" className="min-h-0 w-full flex-1" />
              <span className="flex h-[37px] shrink-0 items-center justify-center bg-[#ececec]">
                <svg width="30" height="32" viewBox="0 0 30 32">
                  <rect x="10" y="2" width="18" height="26" rx="3" fill="#fff" stroke="#2c4f9a" strokeWidth="3" />
                  <rect x="2" y="9" width="15" height="14" fill="#5d7fdc" stroke="#2c4f9a" strokeWidth="2" />
                </svg>
              </span>
            </div>
          </div>
        </div>
        <DeviceOverview />
      </div>
    </div>
  );
}

const navRows: { t: string; l: "a" | "b"; a?: "right" | "down"; sel?: boolean; gray?: boolean }[] = [
  { t: "常规", l: "b" },
  { t: "以太网地址", l: "b" },
  { t: "操作模式", l: "b" },
  { t: "高级选项", l: "b", a: "right" },
  { t: "Web 服务器访问", l: "b" },
  { t: "启动", l: "a" },
  { t: "循环", l: "a", sel: true },
  { t: "通信负载", l: "a" },
  { t: "系统和时钟存储器", l: "a" },
  { t: "SIMATIC Memory Card", l: "a", gray: true },
  { t: "系统诊断", l: "a", a: "down" },
  { t: "常规", l: "b" },
  { t: "PLC 报警", l: "a" },
  { t: "Web 服务器", l: "a", a: "right" },
];

function SmallTab({ label, w, active }: { label: string; w: string; active?: boolean }) {
  return (
    <div
      className={`flex h-[43px] shrink-0 items-center border-x border-t border-[#9b9b9b] pl-[24px] text-[27px] ${w} ${
        active ? "bg-[#efefef] font-bold text-[#222]" : "bg-linear-to-b from-[#e7e7e7] to-[#cfcfcf] text-[#555]"
      }`}
    >
      {label}
    </div>
  );
}

function CheckBox({ on = true, dim = false }: { on?: boolean; dim?: boolean }) {
  return (
    <span className={`flex size-[28px] shrink-0 items-center justify-center rounded-[3px] border-2 ${dim ? "border-[#7a8794] bg-[#eef0f2]" : "border-[#4f97c8] bg-[#1d4fb8]"}`}>
      {on && (
        <svg width="20" height="18" viewBox="0 0 20 18">
          <path d="M3 8l5 6L17 3" fill="none" stroke={dim ? "#555" : "#fff"} strokeWidth="3" />
        </svg>
      )}
    </span>
  );
}

function CenterBottom() {
  return (
    <div className="flex min-h-0 flex-1 flex-col bg-[#e8e8e8]">
      <div className="flex h-[52px] shrink-0 items-center justify-between border-b-[7px] border-[#e8a32f] bg-[#a9a9a9] pl-[12px]">
        <span className="text-[28px] text-[#f2f2f2]">PLC_1 [CPU 1511-1 PN]</span>
        <div className="flex h-full items-end pr-[10px]">
          <div className="flex h-[42px] w-[150px] items-center justify-end bg-[#efefef] pr-[45px] text-[28px] font-bold text-[#222]">性</div>
          <div className="ml-[4px] flex h-[42px] w-[150px] items-center gap-[11px] border-x border-t border-[#9b9b9b] bg-linear-to-b from-[#e7e7e7] to-[#cfcfcf] pl-[4px] text-[28px] text-[#555]">
            <svg width="30" height="34" viewBox="0 0 30 34">
              <rect x="3" y="3" width="24" height="28" fill="#f6f8fd" stroke="#8d98b4" strokeWidth="2" />
              <path d="M11 8v3M11 14v12h5" fill="none" stroke="#111" strokeWidth="3" />
            </svg>
            信息
          </div>
          <div className="ml-[4px] flex h-[42px] w-[150px] items-center gap-[10px] border-x border-t border-[#9b9b9b] bg-linear-to-b from-[#e7e7e7] to-[#cfcfcf] pl-[6px] text-[28px] text-[#555]">
            <Ico name="diag" />
            诊断
          </div>
          <div className="ml-[44px] flex items-center gap-[12px] pb-[6px]">
            <WinIcon kind="restore" />
            <WinIcon kind="split" />
            <WinIcon kind="down" />
          </div>
        </div>
      </div>
      <div className="flex h-[49px] shrink-0 items-end border-b border-[#8d8d8d] bg-[#c9c9c9] pl-[13px]">
        <SmallTab label="常规" w="w-[127px]" active />
        <SmallTab label="IO 变量" w="w-[164px] ml-[3px]" />
        <SmallTab label="系统常数" w="w-[191px] ml-[3px]" />
        <SmallTab label="文本" w="w-[190px] ml-[3px]" />
      </div>
      <div className="flex min-h-0 flex-1">
        <div className="flex w-[358px] shrink-0 flex-col overflow-hidden bg-[#f0f0f0] pt-[5px]">
          {navRows.map((r) => (
            <div key={r.t + r.l} className={`flex h-[38px] shrink-0 items-center ${r.l === "b" ? "pl-[70px]" : "pl-[38px]"}`}>
              <span className="-ml-[28px] flex w-[28px] justify-center">{r.a && <Tri dir={r.a} />}</span>
              <span className={`text-[23px] whitespace-nowrap ${r.gray ? "text-[#666]" : "text-[#2d2d2d]"} ${r.sel ? "bg-[#c8ccd4]" : ""}`}>{r.t}</span>
            </div>
          ))}
        </div>
        <VScroll thumb="h-[174px]" className="w-[37px]" />
        <div className="flex w-[16px] shrink-0 flex-col items-center justify-center border-x border-[#aaa] bg-[#d8d8d8] pb-[60px] text-[#222]">
          <Tri dir="left" />
        </div>
        <div className="flex-1 pt-[27px] pl-[24px]">
          <div className="flex h-[33px] items-end gap-[8px] pr-[50px]">
            <span className="text-[30px] leading-[36px] font-bold text-[#222]">循环</span>
            <span className="h-[2px] flex-1 bg-[#333]" />
          </div>
          <div className="mt-[17px] mr-[50px] flex h-[252px] flex-col bg-[#c9c9c9] pt-[141px] pl-[410px]">
            <div className="flex items-center gap-[8px]">
              <CheckBox dim />
              <span className="text-[24px] text-[#333]">启用循环 OB 的最小循环时间</span>
            </div>
            <div className="mt-[20px] -ml-[178px] flex items-center">
              <span className="w-[178px] text-[23px] text-[#999]">最小循环时间：</span>
              <div className="flex h-[50px] w-[360px] items-start justify-between border border-[#aaa] bg-[#e4e4e4] px-[8px] text-[22px] text-[#999]">
                <span>1</span>
                <span>ms</span>
              </div>
            </div>
          </div>
        </div>
      </div>
    </div>
  );
}

const catalog = ["Rack", "PM", "PS", "CPU", "DI", "DQ", "DI/DQ", "AI", "AQ", "AI/AQ", "特殊模块", "通信模块", "工艺模块", "SIMATIC Drive Controller", "接口模块"];

function RightPanel() {
  return (
    <div className="flex min-w-0 flex-1 flex-col bg-[#f0f0f0]">
      <PanelHeader
        pad="pr-[0px]"
        right={
          <>
            <WinIcon kind="restore" />
            <WinIcon kind="split" />
            <svg width="14" height="30" viewBox="0 0 14 30">
              <path d="M0 0l14 15L0 30z" fill="#fff" />
            </svg>
          </>
        }
      >
        <span className="text-[26px] font-bold tracking-[1px]">硬件目录</span>
      </PanelHeader>
      <div className="flex h-[48px] shrink-0 items-center border-b-2 border-[#8f8f8f] bg-linear-to-b from-[#f6f6f6] to-[#dcdcdc] pl-[12px] text-[27px] font-bold text-[#222]">选项</div>
      <div className="flex h-[55px] shrink-0 items-center justify-end bg-[#ececec]">
        <span className="h-[30px] w-[24px] border-y-2 border-l-2 border-[#aab2cf] bg-white" />
      </div>
      <SectionHead title="目录" h="h-[47px]" />
      <div className="mt-[10px] flex h-[39px] shrink-0 items-center gap-[10px] pl-[9px]">
        <div className="flex h-full w-[516px] items-center border-2 border-[#8f8f8f] bg-white pl-[8px] text-[24px] text-[#333]">&lt;搜索&gt;</div>
        <div className="flex h-full w-[47px] items-center justify-center border-2 border-[#aaa] bg-[#e0e0e0]">
          <SortGlyph />
        </div>
        <div className="flex h-full w-[47px] items-center justify-center border-2 border-[#aaa] bg-[#e0e0e0]">
          <SortGlyph up />
        </div>
      </div>
      <div className="mt-[14px] flex h-[34px] shrink-0 items-center pl-[8px]">
        <CheckBox />
        <span className="ml-[8px] text-[24px] text-[#333]">过滤</span>
        <span className="ml-[66px] text-[24px] whitespace-nowrap text-[#222]">配置文件</span>
        <div className="ml-[8px] flex h-full w-[311px] shrink-0 items-center justify-between border-2 border-[#999] bg-white pl-[8px] text-[24px] text-[#333]">
          &lt;全部&gt;
          <span className="flex h-full w-[32px] items-center justify-center border-l border-[#aaa] bg-[#dedede]">
            <Tri dir="down" />
          </span>
        </div>
        <span className="ml-[10px] flex h-[38px] w-[40px] shrink-0 items-center justify-center border-2 border-[#aaa] bg-[#e0e0e0]">
          <Ico name="f-ext" />
        </span>
      </div>
      <div className="flex h-[1110px] shrink-0 flex-col pt-[5px]">
        {catalog.map((c, i) => (
          <div key={c} className="flex h-[38px] shrink-0 items-center pl-[20px]">
            <Tri />
            <span className="ml-[10px]">
              <Ico name="f-local" />
            </span>
            <span className={`ml-[6px] text-[23px] whitespace-nowrap text-[#444] ${i === 0 ? "bg-[#cfd5de]" : ""}`}>{c}</span>
          </div>
        ))}
      </div>
      <SectionHead title="信息" h="h-[42px]" />
      <div className="flex min-h-0 flex-1 bg-[#e8e8e8]">
        <div className="flex min-w-0 flex-1 flex-col pt-[14px] pl-[17px]">
          <span className="text-[23px] text-[#333]">设备：</span>
          <div className="mt-auto flex h-[34px] items-center">
            <span className="w-[166px] text-[23px] text-[#333]">订货号：</span>
            <div className="h-full w-[407px] border-2 border-[#aaa] bg-[#dedede]" />
          </div>
          <div className="mt-[26px] mb-[24px] flex h-[34px] items-center">
            <span className="w-[166px] text-[23px] text-[#333]">版本：</span>
            <div className="flex h-full w-[407px] justify-end border-2 border-[#aaa] bg-[#dedede]">
              <span className="flex w-[30px] items-center justify-center border-l border-[#aaa] bg-[#e6e6e6]">
                <svg width="14" height="9" viewBox="0 0 14 9">
                  <path d="M0 0h14L7 9z" fill="#888" />
                </svg>
              </span>
            </div>
          </div>
        </div>
        <VScroll thumb="h-[172px]" className="w-[20px]" />
      </div>
    </div>
  );
}

const taskTabs: { i: IconName; t: string; active?: boolean }[] = [
  { i: "table", t: "总览" },
  { i: "net", t: "PLC_1", active: true },
  { i: "table", t: "默认变量表" },
  { i: "diag", t: "在线和诊断_..." },
  { i: "ob", t: "Main (OB1)" },
  { i: "fc", t: "块_1 (FC1)" },
];

function TaskBar() {
  return (
    <div className="flex h-[60px] shrink-0 items-center bg-[#1a1a1a] pl-[76px] text-[#d8d8d8]">
      <span className="text-[#e4e4e4]">
        <Tri dir="left" />
      </span>
      <span className="ml-[15px] w-[260px] text-[29px] font-semibold tracking-[0.5px]">Portal 视图</span>
      <div className="flex gap-[5px]">
        {taskTabs.map((t) => (
          <div
            key={t.t}
            className={`flex h-[41px] w-[227px] items-center gap-[12px] border pl-[5px] text-[24px] whitespace-nowrap text-[#333] ${
              t.active ? "border-white bg-white" : "border-[#888] bg-[#c8c8c8]"
            }`}
          >
            <Ico name={t.i} />
            <span className="overflow-hidden">{t.t}</span>
          </div>
        ))}
      </div>
      <span className="ml-[1379px] flex h-[42px] w-[40px] shrink-0 items-center justify-center bg-[#c8ccd4]">
        <Ico name="alarmtext" />
      </span>
      <span className="ml-[12px] h-full w-px bg-[#555]" />
      <span className="ml-[8px] flex size-[30px] shrink-0 items-center justify-center rounded-full bg-[#1c2fd8]">
        <svg width="20" height="18" viewBox="0 0 20 18">
          <path d="M3 9l5 6L17 3" fill="none" stroke="#fff" strokeWidth="4" />
        </svg>
      </span>
      <span className="ml-[12px] text-[25px] tracking-[2px] whitespace-nowrap text-[#ccc]">下载完成（错误：0；警告：0）。</span>
      <div className="ml-[78px] flex gap-[2px]">
        <span className="h-[30px] w-[12px] bg-white" />
        {[0, 1, 2, 3, 4, 5].map((i) => (
          <span key={i} className="h-[30px] w-[5px] bg-[#d8501c]" />
        ))}
      </div>
    </div>
  );
}

const dialogList = [
  "Program cycle", "Startup", "Time delay interrupt", "Cyclic interrupt", "Hardware interrupt", "Time error interrupt", "Diagnostic error interrupt",
  "Pull or plug of modules", "Rack or station failure", "Programming error", "IO access error", "Time of day", "MC-Interpolator", "MC-Servo", "MC-PreServo",
  "MC-PostServo", "MC-PreInterpolator", "Synchronous Cycle", "Status", "Update", "Profile",
];

function BlockBtn({ tag, label, body, dark, light, selected, db }: { tag: string; label: string; body: string; dark: string; light: string; selected?: boolean; db?: boolean }) {
  return (
    <div className={`flex h-[190px] w-[190px] shrink-0 flex-col items-center border border-[#aaa] ${selected ? "bg-white" : "bg-linear-to-b from-[#f2f2f2] via-[#c8c8c8] to-[#eaeaea]"}`}>
      <div className={`relative h-[84px] w-[96px] ${selected ? "mt-[30px]" : "mt-[24px]"}`}>
        {db ? (
          <svg width="64" height="86" viewBox="0 0 64 86" className="-mt-[6px] ml-[18px]">
            <path d="M2 14v56c0 8 13 14 30 14s30-6 30-14V14z" fill="#2f3fd8" />
            <ellipse cx="32" cy="14" rx="30" ry="13" fill="#a8b4ff" />
          </svg>
        ) : (
          <svg width="92" height="64" viewBox="0 0 92 64" className="mt-[3px]">
            <path d="M0 14h16v9H0zM0 40h16v9H0zM76 26h16v9H76z" fill={dark} />
            <rect x="14" y="0" width="62" height="62" fill={body} />
            <rect x="14" y="54" width="62" height="8" fill={dark} />
            <rect x="38" y="20" width="26" height="28" fill={light} />
          </svg>
        )}
        <span className="absolute right-0 bottom-[7px] text-[34px] leading-[34px] font-bold text-[#111]">{tag}</span>
      </div>
      <span className="mt-[15px] text-[24px] text-[#222]">{label}</span>
    </div>
  );
}

function Dialog() {
  return (
    <div className="absolute top-[519px] left-[1296px] flex h-[1198px] w-[1379px] flex-col border border-white bg-[#c9c9c9] shadow-[0_0_0_1px_#333]">
      <div className="flex h-[42px] shrink-0 items-center justify-between bg-linear-to-b from-[#8a8a8a] from-0% via-[#1a1a1a] via-40% to-[#1a1a1a] pb-[2px] pl-[8px]">
        <span className="text-[27px] font-bold text-white">添加新块</span>
        <span className="flex h-full w-[40px] items-center justify-center border-l border-[#888]">
          <svg width="26" height="26" viewBox="0 0 26 26">
            <path d="M3 3l20 20M23 3L3 23" stroke="#fff" strokeWidth="4" />
          </svg>
        </span>
      </div>
      <div className="h-[120px] shrink-0 border-b-2 border-[#b9b9b9] pt-[28px] pl-[39px]">
        <p className="text-[23px] leading-[30px] text-[#333]">名称：</p>
        <div className="flex h-[35px] w-[764px] items-center border border-[#999] bg-white pl-[8px] text-[22px] text-[#333]">Time error interrupt</div>
      </div>
      <div className="flex h-[888px] shrink-0">
        <div className="flex w-[268px] shrink-0 flex-col gap-[26px] border-r-2 border-[#b9b9b9] pt-[26px] pl-[38px]">
          <BlockBtn tag="OB" label="组织块" body="#a714e0" dark="#54108f" light="#d76cf0" selected />
          <BlockBtn tag="FB" label="函数块" body="#1a86e0" dark="#0b3db8" light="#3fc0f8" />
          <BlockBtn tag="FC" label="函数" body="#1ea02c" dark="#0b6e1c" light="#5cd85e" />
          <BlockBtn tag="DB" label="数据块" body="#2f3fd8" dark="#2f3fd8" light="#2f3fd8" db />
        </div>
        <div className="mt-[25px] ml-[34px] flex h-[841px] w-[499px] shrink-0 flex-col bg-[#f0f0f0]">
          {dialogList.map((d) => (
            <div key={d} className="flex h-[38px] shrink-0 items-center pl-[33px] even:bg-[#f4f4f4]">
              <BlockGlyph body="#8a18c8" dark="#3f0d78" light="#a93fe0" />
              <span className={`ml-[6px] text-[23px] leading-[28px] whitespace-nowrap ${d === "Time error interrupt" ? "border border-dotted border-white bg-[#2f60c8] text-white" : "text-[#333]"}`}>{d}</span>
            </div>
          ))}
        </div>
        <div className="flex min-w-0 flex-1 flex-col pt-[26px] pr-[38px] pl-[40px]">
          <div className="flex h-[34px] items-center justify-between">
            <span className="text-[23px] text-[#333]">语言：</span>
            <div className="flex h-full w-[276px] items-center justify-between border border-[#999] bg-white pl-[8px] text-[22px] text-[#333]">
              LAD
              <span className="flex h-full w-[32px] items-center justify-center border-l border-[#aaa] bg-[#dedede]">
                <Tri dir="down" />
              </span>
            </div>
          </div>
          <div className="mt-[26px] flex h-[35px] items-center justify-between">
            <span className="text-[23px] text-[#333]">编号：</span>
            <div className="flex h-full w-[276px] items-center justify-between border-2 border-[#a9a9a9] bg-[#c2c2c2] pl-[6px] text-[22px] text-[#999]">
              80
              <span className="flex h-full w-[32px] flex-col items-center justify-center gap-[4px] border-l border-[#aaa] bg-[#d6d6d6]">
                <span className="size-0 border-x-[7px] border-b-[8px] border-x-transparent border-b-[#999]" />
                <span className="size-0 border-x-[7px] border-t-[8px] border-x-transparent border-t-[#999]" />
              </span>
            </div>
          </div>
          <div className="mt-[17px] flex items-center pl-[220px]">
            <span className="size-[26px] rounded-full border border-[#bbb] bg-[#e4e4e4]" />
            <span className="ml-[7px] text-[22px] text-[#999]">手动</span>
          </div>
          <div className="mt-[15px] flex items-center pl-[220px]">
            <span className="flex size-[26px] items-center justify-center rounded-full border border-[#bbb] bg-[#e4e4e4]">
              <span className="size-[8px] rounded-full bg-[#999]" />
            </span>
            <span className="ml-[7px] text-[22px] text-[#999]">自动</span>
          </div>
          <p className="mt-[80px] text-[23px] text-[#333]">描述：</p>
          <p className="mt-[10px] text-[23px] leading-[29px] whitespace-nowrap text-[#333]">
            超出最大循环时间后，"时间错误中断" OB 将
            <br />
            中断程序的循环执行。最大循环时间在 PLC 的
            <br />
            属性中被定义。
          </p>
          <span className="mt-auto mb-[14px] text-[22px] text-[#2a2ab8]">更多信息...</span>
        </div>
      </div>
      <div className="flex h-[42px] shrink-0 items-center border-y border-[#999] bg-linear-to-b from-[#ececec] to-[#d2d2d2]">
        <span className="flex h-full w-[41px] items-center justify-center border-r border-[#aaa]">
          <svg width="12" height="18" viewBox="0 0 12 18">
            <path d="M2 2l7 7-7 7" fill="none" stroke="#111" strokeWidth="3" />
          </svg>
        </span>
        <span className="ml-[8px] text-[28px] font-semibold text-[#222]">更多信息</span>
      </div>
      <div className="flex h-[87px] shrink-0 items-center bg-[#ababab] pl-[26px]">
        <CheckBox />
        <span className="ml-[8px] text-[24px] text-[#333]">新增并打开(O)</span>
        <div className="ml-auto flex h-[37px] w-[177px] items-center justify-center border border-[#8fd494] bg-linear-to-b from-[#d8efd8] via-[#6cc46c] to-[#b6e0b6] text-[23px] text-[#222]">确定</div>
        <div className="mr-[28px] ml-[26px] flex h-[37px] w-[177px] items-center justify-center border border-[#bbb] bg-linear-to-b from-[#fafafa] via-[#d0d0d0] to-[#e8e8e8] text-[23px] text-[#222]">取消</div>
      </div>
      <div className="min-h-0 flex-1 bg-linear-to-b from-[#666] from-0% to-[#1a1a1a] to-30%" />
    </div>
  );
}

export default function App() {
  return (
    <div className="relative flex h-[2160px] w-[3840px] overflow-hidden bg-black font-['Open_Sans','Noto_Sans_CJK_SC',sans-serif]">
      <div className="w-[66px] shrink-0 bg-black" />
      <div className="flex min-w-0 flex-1 flex-col">
        <div className="flex h-[124px] shrink-0 flex-col border-b-2 border-black">
          <div className="h-[78px] shrink-0 bg-black" />
          <div className="relative flex-1 bg-linear-to-b from-[#9a9a9a] from-0% via-[#1a1a1a] via-35% to-[#1a1a1a]">
            <span className="absolute top-[6px] left-[9px] text-[24px] text-[#8d9ab8]">V17</span>
            <span className="absolute top-[8px] left-[56px] text-[24px] text-[#c8c8c8]">Siemens - TIA V17\ob1\ob1</span>
            <span className="absolute top-[28px] right-[10px] h-[3px] w-[14px] bg-white" />
          </div>
        </div>
        <MenuBar />
        <div className="flex h-[1875px] shrink-0">
          <div className="flex w-[47px] shrink-0 flex-col bg-[#b2b2b2]">
            <div className="mt-[50px] h-[2px] w-full bg-[#e4e4e4]" />
            <span className="mt-[145px] rotate-180 self-center text-[30px] leading-[34px] font-semibold whitespace-nowrap text-white [writing-mode:vertical-rl]">设备与网络</span>
          </div>
          <LeftPanel />
          <div className="w-[5px] shrink-0 bg-[#222]" />
          <div className="flex w-[2448px] shrink-0 flex-col">
            <CenterTop />
            <div className="h-[6px] shrink-0 bg-[#222]" />
            <CenterBottom />
          </div>
          <div className="w-[5px] shrink-0 bg-[#222]" />
          <RightPanel />
        </div>
        <TaskBar />
      </div>

      <Dialog />

      <svg width="26" height="38" viewBox="0 0 26 38" className="absolute top-[944px] left-[1820px]">
        <path d="M2 2v30l7-7 6 11 5-3-6-10h9z" fill="#fff" stroke="#222" strokeWidth="2" />
      </svg>

      <div className="absolute top-[1828px] left-[900px] flex h-[147px] w-[2039px] items-center justify-center bg-[#f0f5b8]/85 text-[126px] leading-none font-black whitespace-nowrap text-black [-webkit-text-stroke:3px_#000]">
        当然循环中的程序是优先级是最高的
      </div>

      <div className="absolute top-[-8px] left-[-38px] origin-top scale-y-110 text-[80px] leading-[112px] font-bold whitespace-nowrap text-[#eaf0fc] [-webkit-text-stroke:17px_#b8006a] [paint-order:stroke_fill] [filter:drop-shadow(0_0_1px_#7fc29a)]">
        欢迎加入西门子PLC学习交流群：<span className="ml-[26px] text-[84px]">585937843</span>
      </div>
    </div>
  );
}
